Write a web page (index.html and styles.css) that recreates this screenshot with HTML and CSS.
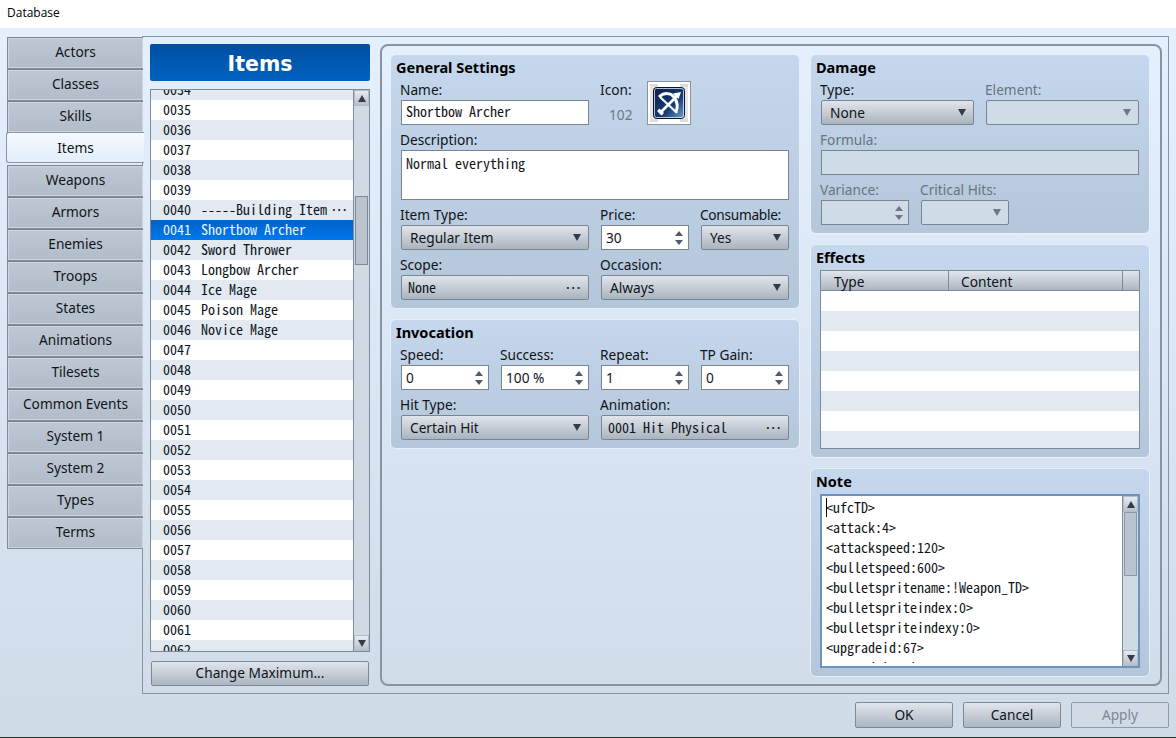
FILE: index.html
```html
<!DOCTYPE html>
<html lang="en">
<head>
<meta charset="utf-8">
<title>Database</title>
<link rel="stylesheet" href="styles.css">
</head>
<body>
<div class="window">
  <div class="titlebar">Database</div>
  <div class="client">
    <div class="db">
      <nav class="tabs">
        <div class="tab">Actors</div>
        <div class="tab">Classes</div>
        <div class="tab">Skills</div>
        <div class="tab active">Items</div>
        <div class="tab">Weapons</div>
        <div class="tab">Armors</div>
        <div class="tab">Enemies</div>
        <div class="tab">Troops</div>
        <div class="tab">States</div>
        <div class="tab">Animations</div>
        <div class="tab">Tilesets</div>
        <div class="tab">Common Events</div>
        <div class="tab">System 1</div>
        <div class="tab">System 2</div>
        <div class="tab">Types</div>
        <div class="tab">Terms</div>
      </nav>
      <div class="frame">
        <div class="left">
          <div class="heading">Items</div>
          <div class="list">
            <div class="rows">
              <div class="row"><span class="id">0034</span></div>
              <div class="row"><span class="id">0035</span></div>
              <div class="row"><span class="id">0036</span></div>
              <div class="row"><span class="id">0037</span></div>
              <div class="row"><span class="id">0038</span></div>
              <div class="row"><span class="id">0039</span></div>
              <div class="row"><span class="id">0040</span><span class="nm">-----Building Item</span><span class="more">···</span></div>
              <div class="row sel"><span class="id">0041</span><span class="nm">Shortbow Archer</span></div>
              <div class="row"><span class="id">0042</span><span class="nm">Sword Thrower</span></div>
              <div class="row"><span class="id">0043</span><span class="nm">Longbow Archer</span></div>
              <div class="row"><span class="id">0044</span><span class="nm">Ice Mage</span></div>
              <div class="row"><span class="id">0045</span><span class="nm">Poison Mage</span></div>
              <div class="row"><span class="id">0046</span><span class="nm">Novice Mage</span></div>
              <div class="row"><span class="id">0047</span></div>
              <div class="row"><span class="id">0048</span></div>
              <div class="row"><span class="id">0049</span></div>
              <div class="row"><span class="id">0050</span></div>
              <div class="row"><span class="id">0051</span></div>
              <div class="row"><span class="id">0052</span></div>
              <div class="row"><span class="id">0053</span></div>
              <div class="row"><span class="id">0054</span></div>
              <div class="row"><span class="id">0055</span></div>
              <div class="row"><span class="id">0056</span></div>
              <div class="row"><span class="id">0057</span></div>
              <div class="row"><span class="id">0058</span></div>
              <div class="row"><span class="id">0059</span></div>
              <div class="row"><span class="id">0060</span></div>
              <div class="row"><span class="id">0061</span></div>
              <div class="row"><span class="id">0062</span></div>
            </div>
            <div class="scroll">
              <div class="sbtn"><i class="tri up"></i></div>
              <div class="strack list-track"><div class="thumb"></div></div>
              <div class="sbtn"><i class="tri down"></i></div>
            </div>
          </div>
          <div class="btn wide">Change Maximum...</div>
        </div>
        <div class="panel">
          <div class="col col-l">
            <section class="group">
              <h2>General Settings</h2>
              <div class="grid g4">
                <div class="f s2"><label>Name:</label><div class="input mono">Shortbow Archer</div></div>
                <div class="f"><label>Icon:</label><div class="iconnum">102</div></div>
                <div class="f iconcell">
                  <div class="iconbox">
                    <svg width="42" height="42" viewBox="0 0 42 42">
                      <defs>
                        <linearGradient id="ig" x1="0" y1="0" x2="1" y2="1">
                          <stop offset="0" stop-color="#0d1b46"/>
                          <stop offset="0.6" stop-color="#173c74"/>
                          <stop offset="1" stop-color="#6ea6cf"/>
                        </linearGradient>
                      </defs>
                      <path d="M2 2h8v3h-8zM32 2h8v3h-8zM2 37h8v3h-8zM32 37h8v3h-8z" fill="#dcdcdc"/>
                      <path d="M2 5h3v32h-3zM37 5h3v32h-3z" fill="#e6e6e6"/>
                      <rect x="5.5" y="5.5" width="31" height="31" rx="3" fill="url(#ig)" stroke="#0a1530"/>
                      <rect x="6.5" y="6.500" width="29" height="29" rx="2" fill="none" stroke="#dfe8f2" stroke-width="0.8"/>
                      <path d="M11 15C16 10 23 11 26 15C29 19 30 25 28 30" fill="none" stroke="#fff" stroke-width="3"/>
                      <path d="M12 15L29 31" fill="none" stroke="#f2f4f7" stroke-width="2.200"/>
                      <path d="M13 30L30 13" fill="none" stroke="#fff" stroke-width="2.600"/>
                      <path d="M33 10l-8 1.500 5.500 5.500zM9 29l4.500 4.500 2.500-2.500-4.500-4.500z" fill="#fff"/>
                    </svg>
                  </div>
                </div>
                <div class="f s4"><label>Description:</label><div class="input mono area">Normal everything</div></div>
                <div class="f s2"><label>Item Type:</label><div class="select"><span>Regular Item</span><i class="tri down"></i></div></div>
                <div class="f"><label>Price:</label><div class="input spin"><span>30</span><b class="spn"><i class="tri up sm"></i><i class="tri down sm"></i></b></div></div>
                <div class="f"><label class="tight">Consumable:</label><div class="select"><span>Yes</span><i class="tri down"></i></div></div>
                <div class="f s2"><label>Scope:</label><div class="select pick mono"><span>None</span><em>···</em></div></div>
                <div class="f s2"><label>Occasion:</label><div class="select"><span>Always</span><i class="tri down"></i></div></div>
              </div>
            </section>
            <section class="group">
              <h2>Invocation</h2>
              <div class="grid g4">
                <div class="f"><label>Speed:</label><div class="input spin"><span>0</span><b class="spn"><i class="tri up sm"></i><i class="tri down sm"></i></b></div></div>
                <div class="f"><label>Success:</label><div class="input spin"><span>100 %</span><b class="spn"><i class="tri up sm"></i><i class="tri down sm"></i></b></div></div>
                <div class="f"><label>Repeat:</label><div class="input spin"><span>1</span><b class="spn"><i class="tri up sm"></i><i class="tri down sm"></i></b></div></div>
                <div class="f"><label>TP Gain:</label><div class="input spin"><span>0</span><b class="spn"><i class="tri up sm"></i><i class="tri down sm"></i></b></div></div>
                <div class="f s2"><label>Hit Type:</label><div class="select"><span>Certain Hit</span><i class="tri down"></i></div></div>
                <div class="f s2"><label>Animation:</label><div class="select pick mono"><span>0001 Hit Physical</span><em>···</em></div></div>
              </div>
            </section>
          </div>
          <div class="col col-r">
            <section class="group">
              <h2>Damage</h2>
              <div class="grid g2">
                <div class="f"><label>Type:</label><div class="select"><span>None</span><i class="tri down"></i></div></div>
                <div class="f off"><label>Element:</label><div class="select"><span></span><i class="tri down"></i></div></div>
                <div class="f s2 off"><label>Formula:</label><div class="input"></div></div>
              </div>
              <div class="grid g4 after">
                <div class="f off"><label>Variance:</label><div class="input spin"><span></span><b class="spn"><i class="tri up sm"></i><i class="tri down sm"></i></b></div></div>
                <div class="f off"><label>Critical Hits:</label><div class="select"><span></span><i class="tri down"></i></div></div>
              </div>
            </section>
            <section class="group">
              <h2>Effects</h2>
              <div class="table">
                <div class="thead"><div class="th t1">Type</div><div class="th t2">Content</div><div class="th t3"></div></div>
                <div class="tr"></div><div class="tr"></div><div class="tr"></div><div class="tr"></div>
                <div class="tr"></div><div class="tr"></div><div class="tr"></div><div class="tr"></div>
              </div>
            </section>
            <section class="group">
              <h2>Note</h2>
              <div class="note">
                <div class="notetext mono"><div class="caretline">&lt;ufcTD&gt;</div><div>&lt;attack:4&gt;</div><div>&lt;attackspeed:120&gt;</div><div>&lt;bulletspeed:600&gt;</div><div>&lt;bulletspritename:!Weapon_TD&gt;</div><div>&lt;bulletspriteindex:0&gt;</div><div>&lt;bulletspriteindexy:0&gt;</div><div>&lt;upgradeid:67&gt;</div><div>&lt;upgradelevel:1&gt;</div></div>
                <div class="scroll">
                  <div class="sbtn"><i class="tri up"></i></div>
                  <div class="strack note-track"><div class="thumb"></div></div>
                  <div class="sbtn"><i class="tri down"></i></div>
                </div>
              </div>
            </section>
          </div>
        </div>
      </div>
    </div>
    <div class="footer">
      <div class="btn">OK</div>
      <div class="btn">Cancel</div>
      <div class="btn disabled">Apply</div>
    </div>
  </div>
</div>
</body>
</html>
```
FILE: styles.css
```css
* { box-sizing: border-box; }
html, body { margin: 0; padding: 0; width: 1176px; height: 738px; overflow: hidden; }
body { font-family: "Noto Sans", "DejaVu Sans", sans-serif; font-size: 13.7px; color: #101418; }
.window { width: 1176px; height: 738px; display: flex; flex-direction: column; border-bottom: 1px solid #2c3a34; }
.titlebar { height: 28px; flex: none; background: #fff; padding-left: 7px; font-size: 12px; line-height: 26px; color: #000; font-family: "Open Sans", "Noto Sans", sans-serif; }
.client { flex: 1; padding: 8px 7px 0; background: linear-gradient(#e4f0fe, #cfdbe7); display: flex; flex-direction: column; }
.db { display: flex; height: 658px; }
.tabs { width: 136px; flex: none; margin-right: -1px; padding-top: 1px; position: relative; z-index: 1; display: flex; flex-direction: column; }
.tab { height: 32px; flex: none; line-height: 27px; text-align: center; background: linear-gradient(#bec8d4, #b2bcc8); border: 1px solid #828c98; border-top-color: #7b8591; border-right: 0; box-shadow: inset 0 0 0 1px #cdd5de; }
.tab.active { background: linear-gradient(#f4f9ff, #e2eefc); margin-left: -1px; margin-right: -1px; border: 1px solid #8b95a2; border-right: 0; border-radius: 3px 0 0 3px; box-shadow: none; height: 31px; margin-top: -1px; margin-bottom: 2px; line-height: 29px; }
.frame { flex: 1; border: 1px solid #8a94a0; padding: 7px 6px 7px 7px; display: flex; gap: 10px; min-width: 0; }
.left { width: 220px; flex: none; display: flex; flex-direction: column; }
.heading { height: 37px; flex: none; border-radius: 2px; background: linear-gradient(#004f9f, #0062c2); color: #fff; text-align: center; font-weight: 700; font-size: 20.500px; line-height: 40px; font-family: "DejaVu Sans", sans-serif; }
.list { height: 563px; margin-top: 8px; flex: none; border: 1px solid #808a96; display: flex; background: #fff; overflow: hidden; }
.rows { flex: 1; overflow: hidden; min-width: 0; }
.row { height: 20px; display: flex; align-items: center; padding: 0 0 2px 12px; background: #fff; font-family: "Noto Sans Mono CJK JP", "Noto Sans Mono CJK SC", "DejaVu Sans Mono", monospace; font-size: 14px; color: #0c1420; white-space: pre; }
.row:first-child { margin-top: -10px; }
.row:nth-child(odd) { background: #e2e9f1; }
.row.sel { background: linear-gradient(#0063c6, #0078ee); color: #e8f2ff; }
.nm { margin-left: 10px; }
.more { margin-left: auto; padding-right: 7px; letter-spacing: -2.500px; }
.mono, .mono span { font-family: "Noto Sans Mono CJK JP", "Noto Sans Mono CJK SC", "DejaVu Sans Mono", monospace; font-size: 14px; }
.scroll { width: 16px; flex: none; border-left: 1px solid #828c98; display: flex; flex-direction: column; background: #cfdae5; }
.sbtn { height: 16px; flex: none; display: flex; align-items: center; justify-content: center; background: linear-gradient(#e6ebf0, #b6c0cb); border: 1px solid #b2bcc8; }
.strack { flex: 1; padding: 0 1px; }
.list-track { padding-top: 90px; }
.note-track { padding-top: 0; }
.thumb { height: 69px; background: #bac4d0; border: 1px solid #7e8995; }
.note-track .thumb { height: 64px; border-color: #8e99a5; }
.tri { display: block; width: 0; height: 0; border-left: 4.500px solid transparent; border-right: 4.500px solid transparent; }
.tri.up { border-bottom: 7px solid #333c46; }
.tri.down { border-top: 7px solid #333c46; }
.tri.sm { border-left-width: 4px; border-right-width: 4px; }
.tri.sm.up { border-bottom: 5px solid #505a66; }
.tri.sm.down { border-top: 5px solid #505a66; }
.btn { width: 98px; height: 26px; line-height: 24px; text-align: center; border: 1px solid #7e8994; border-radius: 2px; background: linear-gradient(#e0e5eb, #acb6c1); }
.btn.wide { width: 218px; height: 25px; margin: 9px 1px 0; line-height: 22px; }
.btn.disabled { background: #d0dbe6; border-color: #8f9aa5; color: #7c8794; }
.panel { flex: 1; border: 2px solid #8a94a0; border-radius: 8px; padding: 8px 10px 8px 8px; display: flex; gap: 10px; min-width: 0; }
.col { display: flex; flex-direction: column; gap: 10px; }
.col-l { width: 410px; }
.col-r { width: 340px; }
.group { border: 1px solid #e6f0fb; border-radius: 6px; padding: 5px 10px 8px; background: linear-gradient(#c4d7ec, #b3c6da); }
h2 { margin: 0 0 0 -5px; height: 20px; font-size: 14.500px; line-height: 14px; font-weight: 700; color: #000; }
.grid { display: grid; column-gap: 12px; row-gap: 5px; }
.g4 { grid-template-columns: repeat(4, 88px); }
.g2 { grid-template-columns: repeat(2, 153px); }
.after { margin-top: 5px; }
.f { min-width: 0; }
.s2 { grid-column: span 2; }
.s4 { grid-column: span 4; }
label { display: block; height: 20px; margin-left: -1px; line-height: 20px; white-space: nowrap; color: #101418; }
label.tight { letter-spacing: -0.300px; }
.input { height: 25px; background: #fff; border: 1px solid #7a8591; padding-left: 4px; line-height: 23px; color: #101418; }
.input.mono { line-height: 21px; }
.input.area { height: 50px; line-height: 25px; }
.input.spin { display: flex; justify-content: space-between; align-items: center; padding-right: 5px; }
.spn { display: flex; flex-direction: column; gap: 4px; }
.select { height: 25px; border: 1px solid #7a8591; border-radius: 2px; background: linear-gradient(#e0e5eb, #aab4bf); display: flex; align-items: center; justify-content: space-between; padding: 0 7px 0 8px; color: #101418; }
.select.pick { padding: 0 5px 2px 6px; }
.select em { font-style: normal; letter-spacing: -2.500px; padding-right: 3px; }
.iconnum { height: 25px; line-height: 30px; padding-left: 8px; color: #6d7884; }
.iconcell { margin-left: -54px; width: 44px; }
.iconbox { width: 44px; height: 44px; margin-top: 1px; background: #fff; border: 1px solid #8a94a0; }
.iconbox svg { display: block; }
.off label { color: #69747f; }
.off .select, .off .input { background: #cfdbe6; }
.off .tri.down { border-top-color: #6d7884; }
.off .tri.up { border-bottom-color: #6d7884; }
.table { width: 320px; height: 179px; margin: 0 -1px; border: 1px solid #7f8a96; background: #fff; overflow: hidden; }
.thead { height: 20px; display: flex; background: linear-gradient(#dfe5eb, #adb7c2); border-bottom: 1px solid #7f8a96; }
.th { border-right: 1px solid #7f8a96; padding-left: 13px; line-height: 22px; height: 20px; }
.t1 { width: 128px; }
.t2 { width: 174px; padding-left: 12px; }
.t3 { flex: 1; border-right: 0; }
.tr { height: 20px; background: #fff; }
.tr:nth-child(odd) { background: #e2e9f1; }
.note { width: 320px; height: 174px; margin: 0 -1px; border: 2px solid #6c92bd; background: #fff; display: flex; overflow: hidden; }
.notetext { flex: 1; min-width: 0; padding: 1px 0 0 4px; line-height: 20px; white-space: pre; overflow: hidden; color: #101418; clip-path: inset(0 0 3px 0); }
.caretline { position: relative; }
.caretline::before { content: ""; position: absolute; left: 0; top: 1px; width: 1px; height: 19px; background: #000; }
.footer { display: flex; justify-content: flex-end; gap: 10px; margin-top: 8px; }
```
